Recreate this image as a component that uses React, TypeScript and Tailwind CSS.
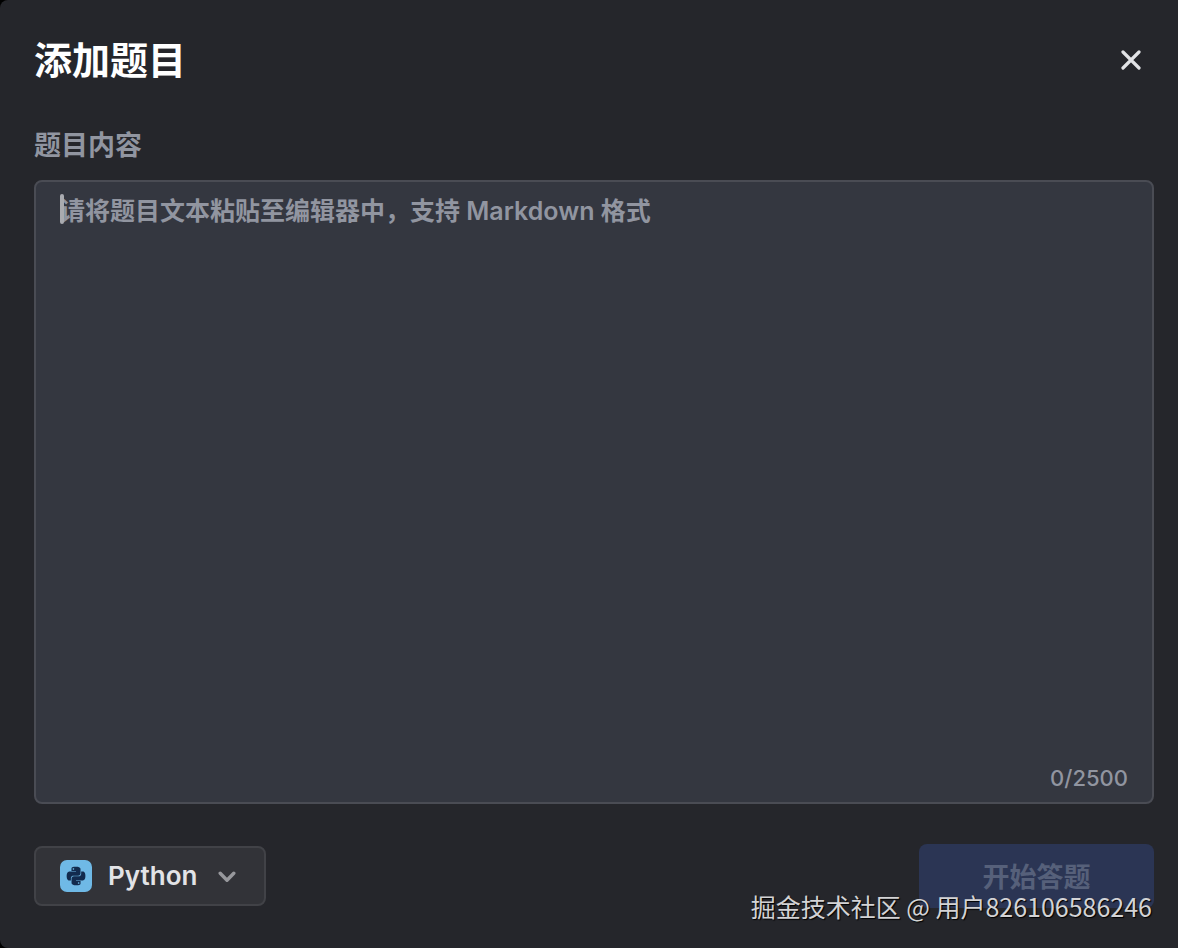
import React, { useState } from "react";

const MAX_LENGTH = 2500;

const languageOptions = ["Python", "Java", "Go", "C++"];

const CloseIcon = () => (
  <svg
    viewBox="0 0 20 20"
    className="h-5 w-5"
    fill="none"
    stroke="currentColor"
    strokeWidth="3.2"
    strokeLinecap="round"
    aria-hidden="true"
  >
    <path d="M2 2l16 16M18 2L2 18" />
  </svg>
);

const ChevronIcon = () => (
  <svg
    viewBox="0 0 18 12"
    className="pointer-events-none mt-0.5 h-3 w-[18px] shrink-0 text-[#97989c]"
    fill="none"
    stroke="currentColor"
    strokeWidth="3.4"
    strokeLinecap="round"
    strokeLinejoin="round"
    aria-hidden="true"
  >
    <path d="M2.2 2.2L9 9.2l6.8-7" />
  </svg>
);

const PythonIcon = () => (
  <svg viewBox="0 0 32 32" className="h-8 w-8 shrink-0" aria-hidden="true">
    <rect width="32" height="32" rx="7" fill="#6fb9e6" />
    <g transform="translate(6.7 6.7) scale(0.775)" fill="#122b4e">
      <path d="M14.25.18l.9.2.73.26.59.3.45.32.34.34.25.34.16.33.1.3.04.26.02.2-.01.13V8.5l-.05.63-.13.55-.21.46-.26.38-.3.31-.33.25-.35.19-.35.14-.33.1-.3.07-.26.04-.21.02H8.77l-.69.05-.59.14-.5.22-.41.27-.33.32-.27.35-.2.36-.15.37-.1.35-.07.32-.04.27-.02.21v3.06H3.17l-.21-.03-.28-.07-.32-.12-.35-.18-.36-.26-.36-.36-.35-.46-.32-.59-.28-.73-.21-.88-.14-1.05-.05-1.23.06-1.22.16-1.04.24-.87.32-.71.36-.57.4-.44.42-.33.42-.24.4-.16.36-.1.32-.05.24-.01h.16l.06.01h8.16v-.83H6.18l-.01-2.75-.02-.37.05-.34.11-.31.17-.28.25-.26.31-.23.38-.2.44-.18.51-.15.58-.12.64-.1.71-.06.77-.04.84-.02 1.27.05zm-6.3 1.98l-.23.33-.08.41.08.41.23.34.33.22.41.09.41-.09.33-.22.23-.34.08-.41-.08-.41-.23-.33-.33-.22-.41-.09-.41.09z" />
      <path d="M21.1 6.11l.28.06.32.12.35.18.36.27.36.35.35.47.32.59.28.73.21.88.14 1.04.05 1.23-.06 1.23-.16 1.04-.24.86-.32.71-.36.57-.4.45-.42.33-.42.24-.4.16-.36.09-.32.05-.24.02-.16-.01h-8.22v.82h5.84l.01 2.76.02.36-.05.34-.11.31-.17.29-.25.25-.31.24-.38.2-.44.17-.51.15-.58.13-.64.09-.71.07-.77.04-.84.01-1.27-.04-1.07-.14-.9-.2-.73-.25-.59-.3-.45-.33-.34-.34-.25-.34-.16-.33-.1-.3-.04-.25-.02-.2.01-.13v-5.34l.05-.64.13-.54.21-.46.26-.38.3-.32.33-.24.35-.2.35-.14.33-.1.3-.06.26-.04.21-.02.13-.01h5.84l.69-.05.59-.14.5-.21.41-.28.33-.32.27-.35.2-.36.15-.36.1-.35.07-.32.04-.28.02-.21V6.07h2.09l.14.01zm-6.47 14.25l-.23.33-.08.41.08.41.23.33.33.23.41.08.41-.08.33-.23.23-.33.08-.41-.08-.41-.23-.33-.33-.23-.41-.08-.41.08z" />
    </g>
  </svg>
);

const App = () => {
  const [content, setContent] = useState("");
  const [language, setLanguage] = useState("Python");

  return (
    <div className="min-h-screen bg-black font-['Inter','Noto_Sans_CJK_SC',sans-serif]">
      <div
        role="dialog"
        aria-labelledby="dialog-title"
        className="relative flex min-h-screen flex-col rounded-l-lg bg-[#25262b] pt-8 pr-6 pb-10 pl-[34px]"
      >
        {/* Header */}
        <div className="flex h-14 items-center justify-between">
          <h1
            id="dialog-title"
            className="text-[38px] leading-14 font-bold text-white"
          >
            添加题目
          </h1>
          <button
            type="button"
            aria-label="关闭"
            className="flex h-11 w-[46px] items-center justify-center text-[#e2e3e6]"
          >
            <CloseIcon />
          </button>
        </div>

        {/* Question content */}
        <label
          htmlFor="question-content"
          className="mt-[38px] text-[27px] leading-10 font-semibold text-[#9195a0]"
        >
          题目内容
        </label>
        <div className="mt-[14px] flex grow flex-col rounded-lg border-2 border-[#4a4c54] bg-[#343740] pb-2">
          <div className="relative flex grow flex-col">
            <textarea
              id="question-content"
              value={content}
              maxLength={MAX_LENGTH}
              onChange={(e) => setContent(e.target.value)}
              placeholder="请将题目文本粘贴至编辑器中，支持 Markdown 格式"
              className="w-full grow resize-none bg-transparent px-6 pt-[9px] text-[25px] leading-10 font-semibold text-[#e2e3e6] caret-transparent outline-none placeholder:text-[#9195a0]"
            />
            {/* Caret */}
            {!content && (
              <span className="pointer-events-none absolute top-3 left-6 h-[30px] w-1 rounded-xs bg-[#a9abb0]" />
            )}
          </div>
          <p className="px-6 text-right text-[22px] leading-8 font-medium text-[#9195a0]">
            {content.length}/{MAX_LENGTH}
          </p>
        </div>

        {/* Footer */}
        <div className="mt-10 flex items-center justify-between">
          <div className="flex h-[60px] items-center rounded-lg border-2 border-[#414247] bg-[#323338] pr-7 pl-6">
            <PythonIcon />
            <select
              aria-label="编程语言"
              value={language}
              onChange={(e) => setLanguage(e.target.value)}
              className="h-full w-[126px] appearance-none bg-transparent pb-0.5 pl-4 text-[26px] font-semibold text-[#e2e3e6] outline-none"
            >
              {languageOptions.map((item) => (
                <option key={item} value={item}>
                  {item}
                </option>
              ))}
            </select>
            <ChevronIcon />
          </div>
          <button
            type="button"
            disabled={!content}
            className="h-16 w-[235px] rounded-lg bg-[#2b3554] pt-1 text-[27px] font-semibold text-[#56607a]"
          >
            开始答题
          </button>
        </div>

        {/* Watermark */}
        <p className="pointer-events-none absolute right-[26px] bottom-[22px] font-['Noto_Sans_CJK_SC',sans-serif] text-[25px] leading-10 text-[#d3d3d5] text-shadow-[1px_1px_1px_#000000]">
          掘金技术社区 @ 用户826106586246
        </p>
      </div>
    </div>
  );
};

export default App;
